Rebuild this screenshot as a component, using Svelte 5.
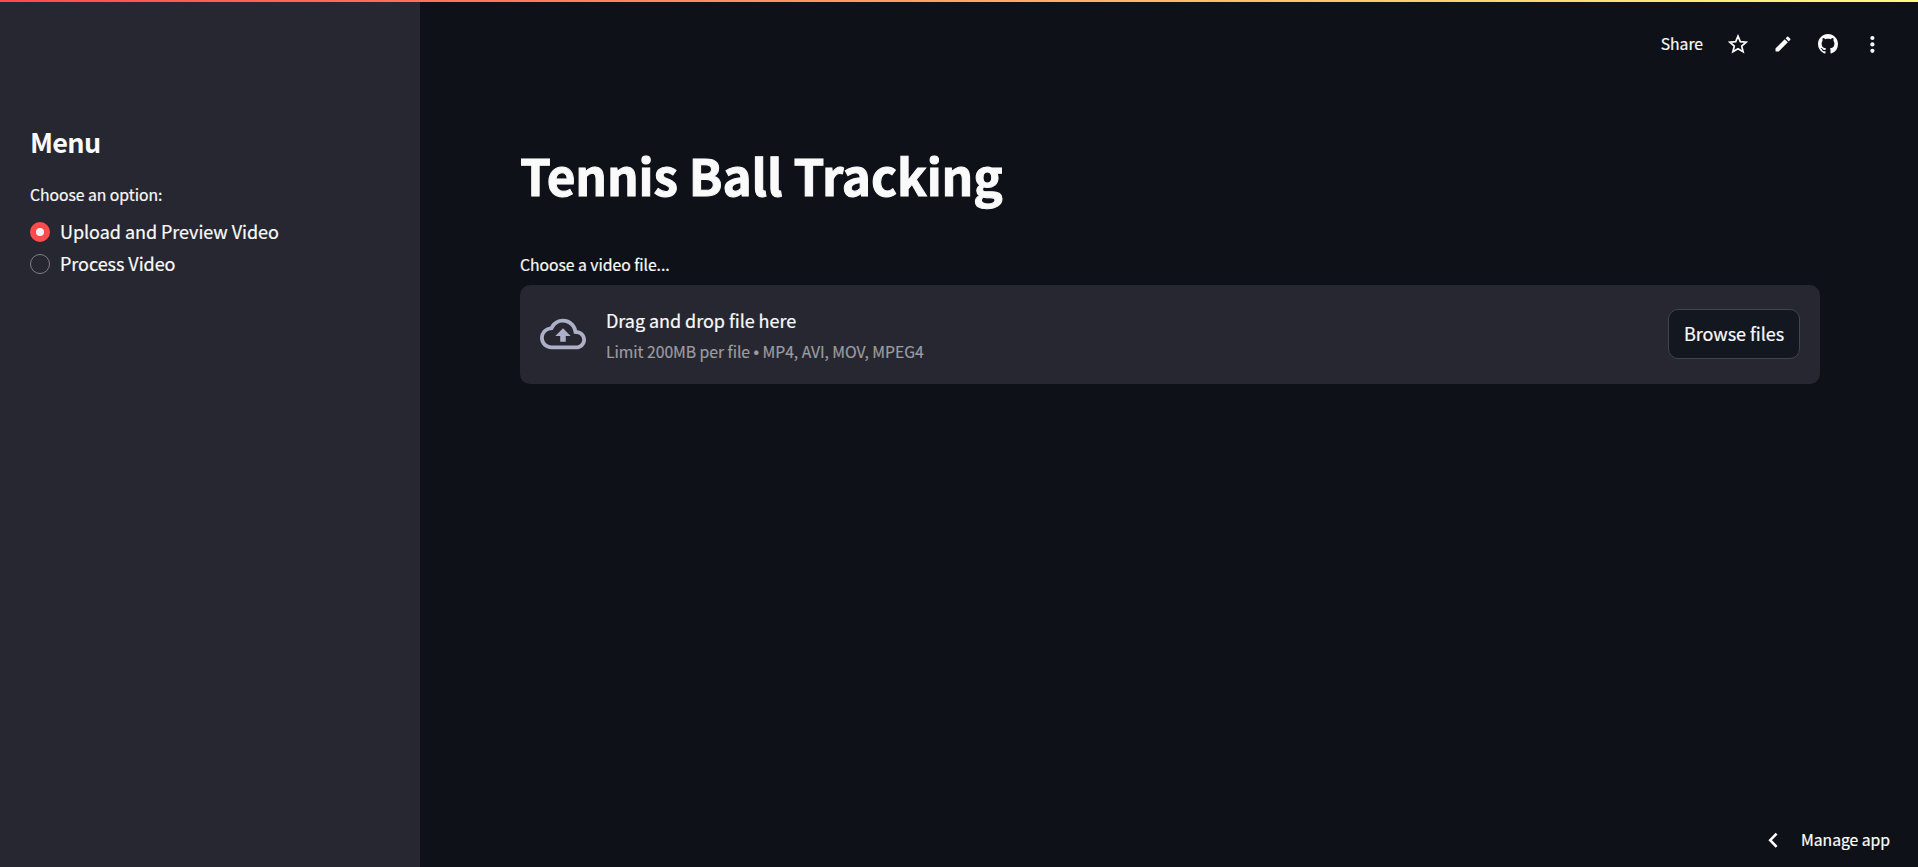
<script>
  let selected = $state(0);
  const options = ['Upload and Preview Video', 'Process Video'];
</script>

<div class="app">
  <div class="decoration"></div>
  <aside>
    <h2>Menu</h2>
    <div class="label option-label">Choose an option:</div>
    <div class="radios">
      {#each options as option, i}
        <button class="radio" onclick={() => (selected = i)}>
          <span class="dot" class:checked={selected === i}></span>
          <span class="radio-text">{option}</span>
        </button>
      {/each}
    </div>
  </aside>
  <main>
    <header>
      <span class="share">Share</span>
      <svg class="star" viewBox="0 0 20 20" width="20" height="20"><path d="M10 2.1l2.3 5.5 5.9.5-4.5 3.9 1.4 5.8-5.1-3.1-5.1 3.1 1.4-5.8-4.5-3.9 5.9-.5z" fill="none" stroke="#fafafa" stroke-width="1.7" /></svg>
      <svg class="pencil" viewBox="0 0 24 24" width="20" height="20"><path d="M3 17.46v3.04c0 .28.22.5.5.5h3.04c.13 0 .26-.05.35-.15L17.81 9.94l-3.75-3.75L3.15 17.1c-.1.1-.15.22-.15.36zM20.71 7.04a.996.996 0 000-1.41l-2.34-2.34a.996.996 0 00-1.41 0l-1.83 1.83 3.75 3.75 1.83-1.83z" /></svg>
      <svg class="github" viewBox="0 0 16 16" width="20" height="20"><path d="M8 0C3.58 0 0 3.58 0 8c0 3.54 2.29 6.53 5.47 7.59.4.07.55-.17.55-.38 0-.19-.01-.82-.01-1.49-2.01.37-2.53-.49-2.69-.94-.09-.23-.48-.94-.82-1.13-.28-.15-.68-.52-.01-.53.63-.01 1.08.58 1.23.82.72 1.21 1.87.87 2.33.66.07-.52.28-.87.51-1.07-1.78-.2-3.64-.89-3.64-3.95 0-.87.31-1.59.82-2.15-.08-.2-.36-1.02.08-2.12 0 0 .67-.21 2.2.82.64-.18 1.32-.27 2-.27s1.36.09 2 .27c1.53-1.04 2.2-.82 2.2-.82.44 1.1.16 1.92.08 2.12.51.56.82 1.27.82 2.15 0 3.07-1.87 3.75-3.65 3.95.29.25.54.73.54 1.48 0 1.07-.01 1.93-.01 2.2 0 .21.15.46.55.38A8.01 8.01 0 0016 8c0-4.42-3.58-8-8-8z" /></svg>
      <svg class="more" viewBox="0 0 6 20" width="6" height="20"><circle cx="3.4" cy="4" r="2.1" /><circle cx="3.4" cy="10.4" r="2.1" /><circle cx="3.4" cy="16.8" r="2.1" /></svg>
    </header>
    <section class="content">
      <h1>Tennis Ball Tracking</h1>
      <div class="label file-label">Choose a video file...</div>
      <div class="dropzone">
        <svg class="cloud" viewBox="0 0 24 24" width="46" height="46"><path d="M19.35 10.04A7.49 7.49 0 0012 4C9.11 4 6.6 5.64 5.35 8.04A5.994 5.994 0 000 14c0 3.31 2.69 6 6 6h13c2.76 0 5-2.24 5-5 0-2.64-2.05-4.78-4.65-4.96zM19 18H6c-2.21 0-4-1.79-4-4 0-2.05 1.53-3.76 3.56-3.97l1.07-.11.5-.95A5.469 5.469 0 0112 6c2.62 0 4.88 1.86 5.39 4.43l.3 1.5 1.53.11A2.98 2.98 0 0122 15c0 1.65-1.35 3-3 3zM8 13h2.55v3h2.9v-3H16l-4-4z" /></svg>
        <div class="hint">
          <span class="drag">Drag and drop file here</span>
          <span class="limit">Limit 200MB per file <span class="bullet">•</span> MP4, AVI, MOV, MPEG4</span>
        </div>
        <button class="browse">Browse files</button>
      </div>
    </section>
    <footer>
      <svg viewBox="0 0 10 16" width="10" height="16"><path d="M8.6 1.6L2.2 8.2l6.4 6.6" fill="none" stroke="#fff" stroke-width="2.6" /></svg>
      <span>Manage app</span>
    </footer>
  </main>
</div>

<style>
  :global(body) { margin: 0; background: #0e1117; }
  .app {
    position: relative;
    display: flex;
    width: 100%;
    height: 867px;
    overflow: hidden;
    background: #0e1117;
    color: #fafafa;
    font-family: "Noto Sans CJK SC", "Noto Sans", sans-serif;
    font-size: 18px;
    line-height: 30px;
    letter-spacing: -0.045px;
    white-space: nowrap;
    -webkit-text-stroke: 0.2px;
  }
  .decoration {
    position: absolute;
    inset: 0 0 auto 0;
    height: 2px;
    background: linear-gradient(90deg, #ff4b4b, #fffd80);
  }
  aside {
    box-sizing: border-box;
    width: 420px;
    flex: none;
    padding: 124px 30px 0;
    background: #262730;
  }
  h1, h2 { margin: 0; font-weight: 700; }
  h2 { font-size: 27px; line-height: 36px; letter-spacing: -0.7px; -webkit-text-stroke: 0; }
  .label { font-size: 15.75px; line-height: 24px; }
  .option-label { margin-top: 23px; }
  .radios { display: flex; flex-direction: column; gap: 2px; margin-top: 10px; }
  button { font: inherit; letter-spacing: inherit; color: inherit; cursor: pointer; }
  .radio {
    display: flex;
    align-items: center;
    gap: 10px;
    height: 30px;
    padding: 0;
    border: 0;
    background: none;
  }
  .radio-text { padding-bottom: 2px; }
  .dot {
    box-sizing: border-box;
    width: 20px;
    height: 20px;
    border: 1px solid #7d7e84;
    border-radius: 50%;
  }
  .dot.checked { border: 6px solid #ff4b4b; background: #f0f2f6; }
  main { flex: 1; display: flex; flex-direction: column; min-width: 0; }
  header {
    display: flex;
    align-items: center;
    justify-content: flex-end;
    height: 88px;
    padding-right: 43px;
    fill: #fafafa;
  }
  .share { font-size: 15.75px; margin-right: 25px; }
  .star { margin-right: 25px; }
  .pencil { margin-right: 25px; }
  .github { margin-right: 31px; }
  .content { padding: 0 98px 0 100px; }
  h1 {
    margin-top: 54px;
    font-size: 49.5px;
    line-height: 66px;
    letter-spacing: -0.14px;
    -webkit-text-stroke: 1px;
  }
  .file-label { margin-top: 45px; }
  .dropzone {
    box-sizing: border-box;
    display: flex;
    align-items: center;
    height: 99px;
    margin-top: 8px;
    padding: 0 20px;
    border-radius: 10px;
    background: #262730;
  }
  .cloud { fill: #adb1c7; margin: 0 20px 1px 0; }
  .hint { display: flex; flex: 1; flex-direction: column; padding-top: 6px; }
  .limit { font-size: 15.75px; line-height: 34px; color: #9c9ca1; }
  .bullet { font-family: "Liberation Sans", sans-serif; }
  .browse {
    box-sizing: border-box;
    width: 132px;
    height: 50px;
    margin-bottom: 1px;
    padding: 0 0 3px;
    border: 1px solid #41444c;
    border-radius: 10px;
    background: #131720;
  }
  footer {
    display: flex;
    align-items: center;
    justify-content: flex-end;
    gap: 23px;
    height: 54px;
    margin-top: auto;
    padding-right: 28px;
    color: #fff;
    font-size: 15.75px;
  }
</style>
